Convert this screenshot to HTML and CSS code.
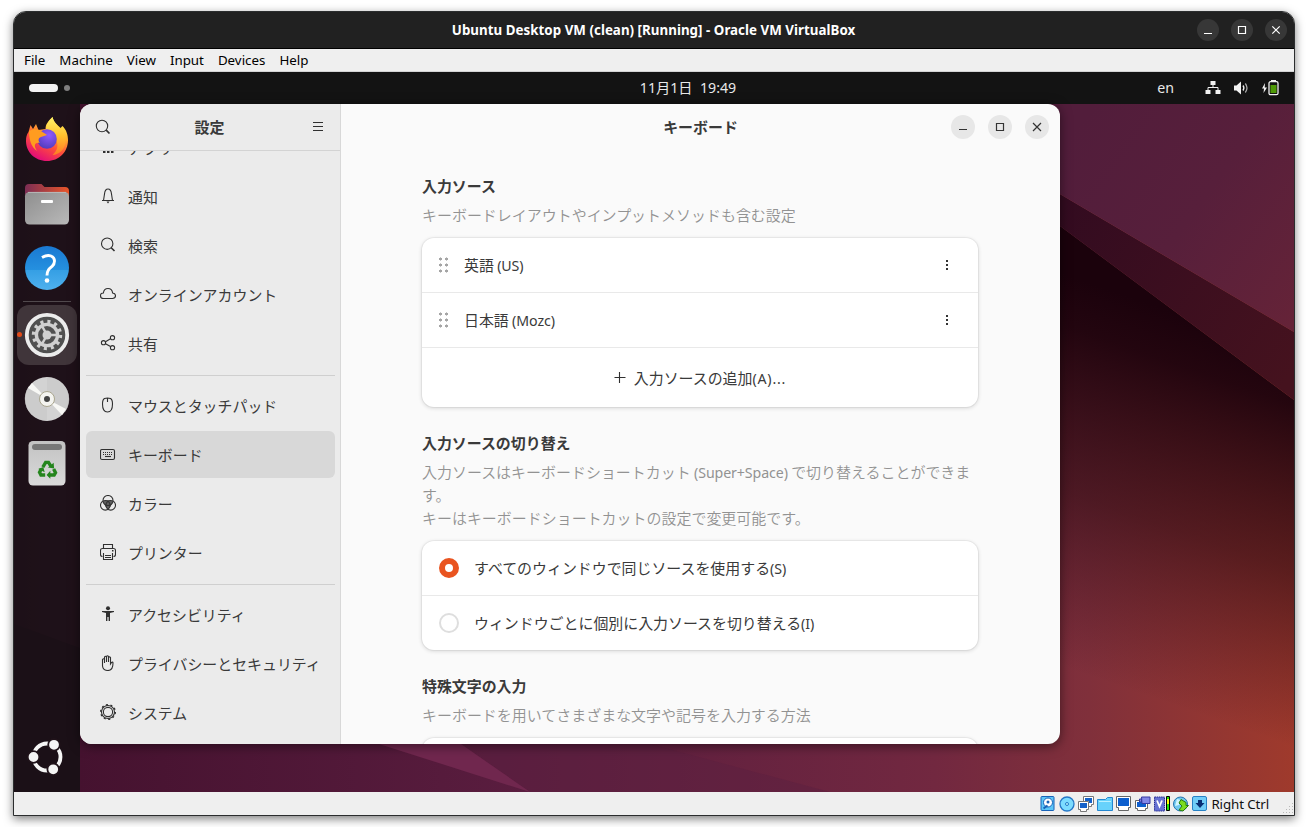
FILE: index.html
```
<!DOCTYPE html>
<html lang="ja">
<head>
<meta charset="utf-8">
<title>Ubuntu Desktop VM</title>
<link rel="stylesheet" href="styles.css">
</head>
<body>
<div class="vm">
  <header class="vm-title">
    <span class="vm-side"></span>
    <span class="vm-name">Ubuntu Desktop VM (clean) [Running] - Oracle VM VirtualBox</span>
    <span class="vm-side vm-buttons">
      <i class="round"><svg width="22" height="22"><path d="M7 14.500h8"/></svg></i>
      <i class="round"><svg width="22" height="22"><path d="M7.500 7.500h7v7h-7z"/></svg></i>
      <i class="round"><svg width="22" height="22"><path d="M7.300 7.300l7.400 7.400M14.700 7.300l-7.400 7.400"/></svg></i>
    </span>
  </header>
  <nav class="vm-menu"><span>File</span><span>Machine</span><span>View</span><span>Input</span><span>Devices</span><span>Help</span></nav>

  <div class="panel">
    <div class="workspaces"><b></b><i></i></div>
    <div class="clock">11月1日&nbsp; 19:49</div>
    <div class="indicators">
      <span class="lang">en</span>
      <svg width="16" height="16" viewBox="0 0 16 16"><path fill="#f2f2f2" d="M5.500 1h5v4h-5zM.5 10h5v4h-5zM10.500 10h5v4h-5z"/><path fill="none" stroke="#f2f2f2" d="M8 5v2.500M3 10V7.500h10V10"/></svg>
      <svg width="16" height="16" viewBox="0 0 16 16"><path fill="#f2f2f2" d="M1 5.500h2.500L8 1.500v13L3.500 10.500H1z"/><path fill="none" stroke="#f2f2f2" stroke-width="1.300" d="M10 5.500q1.800 2.500 0 5"/><path fill="none" stroke="#aaa" stroke-width="1.300" d="M12.300 3.500q3.400 4.500 0 9"/></svg>
      <svg width="18" height="16" viewBox="0 0 18 16"><path fill="#f2f2f2" d="M4 3L1 8.500h2L2.500 13 6 7.500H3.700zM10 0h5v2h-5z"/><rect x="8" y="1.700" width="9" height="13" rx="1.500" fill="none" stroke="#f2f2f2" stroke-width="1.300"/><path fill="#4e9a06" d="M9.500 5h6v8h-6z"/></svg>
    </div>
  </div>

  <div class="desktop">
    <svg class="wallpaper" width="1280" height="688" viewBox="14 104 1280 688" preserveAspectRatio="none">
      <defs>
        <linearGradient id="base" gradientUnits="userSpaceOnUse" x1="14" y1="0" x2="1294" y2="0"><stop offset="0" stop-color="#3a0b28"/><stop offset=".05" stop-color="#45122f"/><stop offset=".4" stop-color="#5a1d3f"/><stop offset=".72" stop-color="#722840"/><stop offset=".84" stop-color="#80303b"/><stop offset="1" stop-color="#9f3a2c"/></linearGradient>
        <linearGradient id="shade" gradientUnits="userSpaceOnUse" x1="1177" y1="313" x2="1055" y2="665"><stop offset="0" stop-color="#1b020c"/><stop offset=".13" stop-color="#1e030d" stop-opacity=".95"/><stop offset=".55" stop-color="#290812" stop-opacity=".58"/><stop offset="1" stop-color="#30091c" stop-opacity="0"/></linearGradient>
        <linearGradient id="sky" gradientUnits="userSpaceOnUse" x1="1060" y1="150" x2="1294" y2="320"><stop offset="0" stop-color="#521d3b"/><stop offset=".5" stop-color="#571f3b"/><stop offset="1" stop-color="#652338"/></linearGradient>
        <linearGradient id="band" gradientUnits="userSpaceOnUse" x1="1060" y1="210" x2="1294" y2="370"><stop offset="0" stop-color="#330b20"/><stop offset="1" stop-color="#45121e"/></linearGradient>
      </defs>
      <path fill="url(#base)" d="M14 104h1280v688H14z"/>
      <path fill="url(#shade)" d="M900 107L1294 400v392H900z"/>
      <path fill="url(#band)" d="M900 100L1294 332v68L1060 226 900 107z"/>
      <path fill="url(#sky)" d="M908 104h386v228L1060 194z"/>
      <path fill="#5c2040" d="M461 744L530 792h300l-180-48z" opacity=".5"/>
      <path fill="#70274e" d="M379 744h82l69 48z"/>
      <path fill="#2b0920" d="M14 624l66 24v144H14z"/>
    </svg>

    <aside class="dock">
      <div class="tile"><svg width="48" height="48" viewBox="0 0 48 48">
        <defs>
          <linearGradient id="fx" x1=".8" y1=".05" x2=".3" y2="1"><stop offset="0" stop-color="#fff44f"/><stop offset=".3" stop-color="#ffb02e"/><stop offset=".6" stop-color="#ff4f3a"/><stop offset="1" stop-color="#e0077d"/></linearGradient>
          <radialGradient id="globe" cx=".6" cy=".3" r=".8"><stop offset="0" stop-color="#9059ff"/><stop offset="1" stop-color="#4b3ab5"/></radialGradient>
          <linearGradient id="tail" x1="0" y1="0" x2="0" y2="1"><stop offset="0" stop-color="#fff36a"/><stop offset=".5" stop-color="#ffc02c"/><stop offset="1" stop-color="#ff7a26"/></linearGradient>
        </defs>
        <path fill="url(#fx)" d="M5.500 16l2-7 2.500 4 3-5 2.500 6 7-1c0-5 3-8 7-12 1 5 5 8 8 11l2-2c4 4 5.500 9 5.500 14 0 12-9 21-21 21S3 36 3 25c0-4 .5-6 2.500-9z"/>
        <path fill="url(#tail)" d="M23 13c0-5 3-8 6.500-12 1 5 5 8 8 12l2-1c5 9 4 18-1 23-2 2-6 4-9 4 5-5 6-9 4-14-1-7-5-11-10.500-12z"/>
        <circle cx="24" cy="23" r="9.800" fill="url(#globe)"/>
        <path fill="#ff9c20" d="M6 15l5-2 6 1c2 2 3 2 7 5l-6 2c-3 1-3 4-1 6-5-1-7 2-3 8C8 31 6 23 6 15z"/>
      </svg></div>
      <div class="tile"><svg width="48" height="48" viewBox="0 0 48 48">
        <defs><linearGradient id="fold" x1="0" x2="1"><stop offset="0" stop-color="#7c2d54"/><stop offset="1" stop-color="#e9562a"/></linearGradient><linearGradient id="front" x1="0" y1="0" x2="1" y2="1"><stop offset="0" stop-color="#8e8e8e"/><stop offset="1" stop-color="#b9b9b9"/></linearGradient></defs>
        <path fill="url(#fold)" d="M2 8q0-4 4-4h12.500l3 3H42q4 0 4 4v18H2z"/>
        <rect x="2" y="12" width="44" height="32.500" rx="4.500" fill="url(#front)"/><path stroke="#c2c2c2" stroke-width=".8" d="M5 12.400h38"/>
        <rect x="18" y="20" width="12" height="3" rx="1" fill="#fff"/>
      </svg></div>
      <div class="tile"><svg width="48" height="48" viewBox="0 0 48 48">
        <defs><linearGradient id="help" x1="0" y1="0" x2="0" y2="1"><stop offset="0" stop-color="#1a79d2"/><stop offset=".54" stop-color="#2590df"/><stop offset=".55" stop-color="#359fe4"/><stop offset="1" stop-color="#4fb1ee"/></linearGradient></defs>
        <circle cx="24" cy="24" r="22" fill="url(#help)"/><path fill="none" stroke="#fff" stroke-width="2.900" d="M19 13.500q5-3 9-1.500c5 2 4 7.500 1 10.500-3 2.500-5 4-5 9"/><circle cx="24" cy="36.500" r="2.300" fill="#fff"/>
      </svg></div>
      <div class="rule"></div>
      <div class="tile active"><svg width="48" height="48" viewBox="0 0 48 48">
        <circle cx="24" cy="24" r="20.200" fill="#505050" stroke="#ececec" stroke-width="3.800"/>
        <circle cx="24" cy="24" r="13.200" fill="none" stroke="#d0d0d0" stroke-width="4" stroke-dasharray="3 3.910"/>
        <circle cx="24" cy="24" r="10.600" fill="none" stroke="#d0d0d0" stroke-width="3.400"/>
        <path fill="none" stroke="#d0d0d0" stroke-width="2.500" d="M24 24h10M24 24l-5-9M24 24l-5 9"/><circle cx="24" cy="24" r="4.500" fill="#d0d0d0"/>
      </svg></div>
      <div class="tile"><svg width="48" height="48" viewBox="0 0 48 48">
        <circle cx="24" cy="24" r="22" fill="#d3d3d3"/><path fill="#c8c8c8" d="M24 24V2a22 22 0 0 1 18 35zM24 24v22A22 22 0 0 1 6 11z" opacity=".6"/><path fill="#f8f8f5" d="M24 24L5 13l4-5zM24 24l19 10-4 6z"/>
        <circle cx="24" cy="24" r="7.500" fill="#f4f4f0" stroke="#aaa68f"/><circle cx="24" cy="24" r="3" fill="#444"/>
      </svg></div>
      <div class="tile"><svg width="48" height="48" viewBox="0 0 48 48">
        <defs><linearGradient id="bin" x1="0" y1="0" x2="0" y2="1"><stop offset="0" stop-color="#c2c2c2"/><stop offset="1" stop-color="#dadada"/></linearGradient></defs>
        <rect x="5.500" y="2" width="37" height="44.500" rx="4.500" fill="url(#bin)"/><rect x="9" y="5" width="30" height="6" rx="3" fill="#777"/>
        <g transform="translate(1.500 2.200) scale(.94)"><g fill="none" stroke="#24851d" stroke-width="3.600"><path d="M19.500 27.500l3-5h3l2.500 4"/><path d="M31 29.500l2 4-1.500 2.500H26"/><path d="M22 36h-4.500l-1.500-3 2-3.500"/></g>
        <path fill="#24851d" d="M25 28l6.500 1-.5-6zM27.500 31.500v8.500L23.500 36zM14.500 29.500l5.500-2 1.500 5.500z"/></g>
      </svg></div>
      <div class="launcher"><svg width="40" height="40" viewBox="0 0 40 40">
        <circle cx="21" cy="20" r="13.500" fill="none" stroke="#f5f5f5" stroke-width="3.800"/>
        <g fill="#f5f5f5" stroke="#20131a" stroke-width="1.800"><circle cx="7.500" cy="20" r="5.800"/><circle cx="28" cy="7.800" r="5.800"/><circle cx="27.200" cy="32.300" r="5.800"/></g>
      </svg></div>
    </aside>

    <main class="settings">
      <section class="sidebar">
        <header class="side-head">
          <svg class="ico" width="16" height="16" viewBox="0 0 16 16"><circle cx="7" cy="7" r="5.700"/><path d="M11.200 11.200l3.300 3.300" stroke-width="1.700"/></svg>
          <h1>設定</h1>
          <svg class="ico" width="16" height="16" viewBox="0 0 16 16"><path d="M3 3.500h10M3 7.500h10M3 11.500h10"/></svg>
        </header>
        <div class="side-list">
          <div class="item"><svg class="ico" width="16" height="16" viewBox="0 0 16 16"><path class="solid" d="M3 11h2.500v3H3zM7 11h2.500v3H7zM11 11h2.500v3H11z"/></svg>アプリ</div>
          <div class="item"><svg class="ico" width="16" height="16" viewBox="0 0 16 16"><path d="M2 12.500h12M3.500 12.500L4.500 6q.5-5 3.500-5t3.500 5l1 6.500"/><path class="solid" d="M6.500 13.500h3L8 15.500z"/></svg>通知</div>
          <div class="item"><svg class="ico" width="16" height="16" viewBox="0 0 16 16"><circle cx="7.200" cy="6.700" r="5.700"/><path d="M11.200 10.700l3.300 3.300" stroke-width="1.600"/></svg>検索</div>
          <div class="item"><svg class="ico" width="16" height="16" viewBox="0 0 16 16"><path d="M3.500 12.500Q.5 12.500.5 9.700T3.400 7q.5-4.500 4.600-4.500T12.600 7q2.900.2 2.900 2.800t-3 2.700z"/></svg>オンラインアカウント</div>
          <div class="item"><svg class="ico" width="16" height="16" viewBox="0 0 16 16"><circle cx="12.500" cy="2.700" r="2.100"/><circle cx="3.500" cy="7.700" r="2.100"/><circle cx="12.500" cy="12.700" r="2.100"/><path d="M5.500 6.700l5-2.900M5.500 8.700l5 2.900"/></svg>共有</div>
          <hr>
          <div class="item"><svg class="ico" width="16" height="16" viewBox="0 0 16 16"><path d="M4.500 1.500q3-1 6 0 2 1 2 5.500c0 5-1.500 8-5 8S2.500 12 2.500 7q0-4.500 2-5.500zM7.500 1v4"/></svg>マウスとタッチパッド</div>
          <div class="item selected"><svg class="ico" width="16" height="16" viewBox="0 0 16 16"><rect x=".5" y="3.500" width="14" height="10" rx="1.500"/><path stroke-dasharray="1 1" d="M3 6.500h10M3 8.500h10"/><path d="M5 10.500h6"/></svg>キーボード</div>
          <div class="item"><svg class="ico" width="16" height="16" viewBox="0 0 16 16"><circle cx="8" cy="5.500" r="5"/><circle cx="5.300" cy="10.300" r="4.800"/><circle cx="10.700" cy="10.300" r="4.800"/><path class="solid" d="M3.500 6q4-1.800 9 0-.5 5-4.500 8Q4 11 3.500 6z" opacity=".75"/></svg>カラー</div>
          <div class="item"><svg class="ico" width="16" height="16" viewBox="0 0 16 16"><path d="M3.500 4.500v-4h9v4M2.500 12.500q-2 0-2-2v-4q0-2 2-2h11q2 0 2 2v4q0 2-2 2M3.500 9v6.500h9V9M5 11.500h6M5 13.500h6"/><path class="solid" d="M12 6h1.500v1.500H12z"/></svg>プリンター</div>
          <hr>
          <div class="item"><svg class="ico" width="16" height="16" viewBox="0 0 16 16"><circle class="solid" cx="8" cy="2.300" r="2"/><path class="solid" d="M2 5h12v1l-4 1v8H8.600v-4H7.400v4H6V7L2 6z"/></svg>アクセシビリティ</div>
          <div class="item"><svg class="ico" width="16" height="16" viewBox="0 0 16 16"><path d="M2.500 8V4.500q1-1.500 2 0V8 2q1-1.500 2 0v5V1.300q1-1.200 2 0V7 2.500q1-1.300 2 0V9l1-1.500q1.500-1 1.500.5 0 7.500-5 7.500t-5.500-4.500z"/></svg>プライバシーとセキュリティ</div>
          <div class="item"><svg class="ico" width="16" height="16" viewBox="0 0 16 16"><circle cx="8" cy="8" r="4.600"/><circle cx="8" cy="8" r="6.500"/><circle cx="8" cy="8" r="7.300" stroke-width="1.400" stroke-dasharray="2 2.587"/></svg>システム</div>
        </div>
      </section>

      <section class="page">
        <header class="page-head">
          <span></span><h1>キーボード</h1>
          <div class="page-buttons">
            <i class="round"><svg width="24" height="24"><path d="M8 14.500h8"/></svg></i>
            <i class="round"><svg width="24" height="24"><path d="M8.500 8.500h7v7h-7z"/></svg></i>
            <i class="round"><svg width="24" height="24"><path d="M8 8l8 8M16 8l-8 8"/></svg></i>
          </div>
        </header>
        <div class="groups">
          <h2>入力ソース</h2>
          <p>キーボードレイアウトやインプットメソッドも含む設定</p>
          <div class="card">
            <div class="row"><span class="grip"></span><span class="label">英語 <span class="latin">(US)</span></span><span class="more"></span></div>
            <div class="row"><span class="grip"></span><span class="label">日本語 <span class="latin">(Mozc)</span></span><span class="more"></span></div>
            <div class="row add"><svg class="ico" width="12" height="12"><path d="M.5 5.500h11M5.500 0v11"/></svg><span>入力ソースの追加<span class="latin wide">(A)...</span></span></div>
          </div>
          <h2>入力ソースの切り替え</h2>
          <p>入力ソースはキーボードショートカット <span class="latin">(Super+Space)</span> で切り替えることができま<br>す。<br>キーはキーボードショートカットの設定で変更可能です。</p>
          <div class="card">
            <div class="row"><span class="radio on"></span><span class="choice">すべてのウィンドウで同じソースを使用する<span class="latin">(S)</span></span></div>
            <div class="row"><span class="radio"></span><span class="choice">ウィンドウごとに個別に入力ソースを切り替える<span class="latin">(I)</span></span></div>
          </div>
          <h2>特殊文字の入力</h2>
          <p>キーボードを用いてさまざまな文字や記号を入力する方法</p>
          <div class="card"><div class="row"></div></div>
        </div>
      </section>
    </main>
  </div>

  <footer class="vm-status">
    <svg width="16" height="16" viewBox="0 0 16 16"><rect x="1" y=".5" width="13" height="14" rx="1" fill="#5cc6f8" stroke="#1762b8"/><circle cx="8" cy="6.500" r="4.500" fill="#fff" stroke="#1762b8"/><circle cx="8" cy="6" r="1.500" fill="#1762b8"/><path stroke="#1762b8" stroke-width="2" d="M3.500 12.500l4-3"/></svg>
    <svg width="16" height="16" viewBox="0 0 16 16"><circle cx="8" cy="8" r="7" fill="#7cdcff" stroke="#2578c8" stroke-width="1.300"/><circle cx="8" cy="8" r="1.500" fill="#bff" stroke="#2578c8"/></svg>
    <svg width="16" height="16" viewBox="0 0 16 16"><g fill="#fff" stroke="#777"><path d="M5.500.5h10v8h-2v2h-8z"/><path d="M.5 5.500h10v8h-2v2h-6v-2h-2z"/></g><path fill="#1561c9" d="M7 2h7v5h-3V5H7zM2 7h7v5H2z"/></svg>
    <svg width="16" height="16" viewBox="0 0 16 16"><path fill="#67d2fb" stroke="#2387d1" d="M.5 3.500h8l2-2h5v13H.5z"/><path stroke="#b9f0ff" d="M2 5.500h12"/></svg>
    <svg width="16" height="16" viewBox="0 0 16 16"><path fill="#fff" stroke="#666" d="M.5.500h14v11h-2v3h-10v-3h-2z"/><path fill="#0d5fce" d="M2 2h11v8H2z"/></svg>
    <svg width="16" height="16" viewBox="0 0 16 16"><path fill="#fff" stroke="#666" d="M.5 4.500h12v8h-2v2h-8v-2h-2z"/><path fill="#0d5fce" d="M2 6h9v5H2z"/><path fill="#8187e6" stroke="#363ba2" d="M6.500 1h8.500v6.500H7zM4.500 3h2v3h-2z"/></svg>
    <svg width="16" height="16" viewBox="0 0 16 16"><path fill="#6672d2" stroke="#272c93" stroke-dasharray="1.500 .7" d="M.5 1h10v14H.5z"/><path fill="none" stroke="#fff" stroke-width="1.800" d="M3 4.500l2.500 6 2.500-6"/><path fill="#20e400" stroke="#000" d="M12.500.500h3v14h-3z"/><path fill="#ff0" d="M13 3h2v5h-2z"/></svg>
    <svg width="16" height="16" viewBox="0 0 16 16"><circle cx="7.500" cy="8" r="7" fill="#70c9ef" stroke="#2473ae"/><path fill="#d2f5ff" d="M4 3l4 1-2 5-4 1z"/><path fill="#7bdc20" stroke="#287c0c" d="M8 3.500l5 3v3h2.500L10 15l-4-1 3-4-3-3z"/></svg>
    <svg width="16" height="16" viewBox="0 0 16 16"><rect x=".5" y=".5" width="14" height="14" rx="1.500" fill="#70cdf7" stroke="#2681c5"/><path fill="#082e73" d="M6 4h4v3h2.500L8 12 3.500 7H6z"/></svg>
    <span class="hostkey">Right Ctrl</span>
    <svg class="resize" width="12" height="12" viewBox="0 0 12 12"><path fill="#b9b9b9" d="M10 0h1v1h-1zM7 3h1v1H7zM10 3h1v1h-1zM4 6h1v1H4zM7 6h1v1H7zM10 6h1v1h-1zM1 9h1v1H1zM4 9h1v1H4zM7 9h1v1H7zM10 9h1v1h-1z"/></svg>
  </footer>
</div>
</body>
</html>
```
FILE: styles.css
```
* { box-sizing: border-box; }
body {
  margin: 0;
  padding: 11px 13px;
  background: #fff;
  font-family: "Noto Sans", "Noto Sans CJK JP", sans-serif;
  font-size: 13.33px;
  overflow: hidden;
}
h1, h2, p { margin: 0; font-weight: 400; }
.vm {
  width: 1282px;
  height: 805px;
  border: 1px solid #2b2d2e;
  border-radius: 13px 13px 0 0;
  overflow: hidden;
  display: flex;
  flex-direction: column;
  background: #efefef;
  box-shadow: 0 3px 10px rgba(0, 0, 0, .5);
}
.vm-title {
  height: 37px;
  flex: none;
  display: flex;
  align-items: center;
  background: #212121;
  border-bottom: 1px solid #000;
  color: #fff;
}
.vm-side { flex: 1; }
.vm-name { padding-left: 6px; font-weight: 700; white-space: nowrap; letter-spacing: .03px; }
.vm-buttons { display: flex; justify-content: flex-end; gap: 12px; padding-right: 7px; }
.round { display: block; border-radius: 50%; }
.round svg { display: block; fill: none; }
.vm-buttons .round { background: #373737; }
.vm-buttons svg { stroke: #fff; stroke-width: 1.2; }
.vm-menu {
  height: 23px;
  flex: none;
  display: flex;
  align-items: center;
  gap: 14px;
  padding-left: 10px;
  border-bottom: 1px solid #d3d4d5;
  color: #000;
}
.panel {
  height: 32px;
  flex: none;
  display: grid;
  grid-template-columns: 1fr auto 1fr;
  align-items: center;
  padding: 0 15px;
  background: #131313;
  color: #e8e8e8;
  font-size: 14.2px;
}
.workspaces { display: flex; align-items: center; gap: 6px; }
.workspaces b { width: 29px; height: 8px; border-radius: 4px; background: #f2f2f2; }
.workspaces i { width: 6px; height: 6px; border-radius: 3px; background: #7f7f7f; }
.clock { padding: 0 0 2px 68px; }
.indicators { display: flex; align-items: center; justify-content: flex-end; gap: 12px; }
.lang { margin-right: 19px; padding-bottom: 2px; }
.desktop { position: relative; height: 688px; flex: none; display: flex; background: #45122f; }
.wallpaper { position: absolute; inset: 0; }
.dock {
  position: relative;
  width: 66px;
  padding-top: 4px;
  display: flex;
  flex-direction: column;
  background: rgba(24, 18, 21, .84);
}
.tile { width: 60px; height: 60px; margin: 2px 3px; display: grid; place-items: center; border-radius: 12px; }
.tile.active { position: relative; background: #40353a; }
.tile.active::before { content: ""; position: absolute; left: 0; top: 27px; width: 5px; height: 5px; border-radius: 50%; background: #e24a18; }
.rule { height: 1px; margin: 1px 9px; background: #51494d; }
.launcher { margin: auto 0 15px 12px; height: 40px; }
.settings {
  position: relative;
  width: 980px;
  height: 640px;
  display: flex;
  border-radius: 12px;
  overflow: hidden;
  background: #fafafa;
  color: #3a3a3a;
  font-family: "Noto Sans CJK JP", sans-serif;
  font-size: 14.93px;
  box-shadow: 0 2px 12px rgba(0, 0, 0, .5);
}
.settings h1, .settings h2 { font-size: 14.93px; font-weight: 700; }
.settings h1 { padding-bottom: 2px; }
.sidebar { width: 261px; height: 640px; background: #ebebeb; border-right: 1px solid #d8d8d8; display: flex; flex-direction: column; }
.side-head { height: 47px; flex: none; display: flex; align-items: center; justify-content: space-between; padding: 0 14px 0 15px; border-bottom: 1px solid #d3d3d3; }
.side-head h1 { padding-right: 2px; }
.ico { display: block; fill: none; stroke: #303030; stroke-width: 1.1; flex: none; }
.ico .solid { fill: #303030; stroke: none; }
.side-list { flex: 1; min-height: 0; overflow: hidden; display: flex; flex-direction: column; gap: 2px; padding: 0 5px 0 6px; }
.item { height: 47px; flex: none; display: flex; align-items: center; gap: 12px; padding-left: 14px; border-radius: 6px; white-space: nowrap; }
.item:first-child { margin-top: -27px; }
.item .ico { margin-top: -1px; }
.selected { background: #d8d8d8; }
.side-list hr { width: 249px; height: 1px; flex: none; margin: 6px 0 4px; border: 0; background: #cfcfcf; }
.page { flex: 1; min-width: 0; }
.page-head { height: 46px; display: grid; grid-template-columns: 1fr auto 1fr; align-items: center; padding-right: 11px; }
.page-buttons { display: flex; justify-content: flex-end; gap: 13px; }
.page-head h1 { padding-left: 11px; }
.page-buttons .round { background: #e7e7e7; }
.page-buttons svg { stroke: #333; stroke-width: 1.2; }
.groups { width: 556px; margin-left: 81px; }
.groups h2 { margin-top: 25px; height: 22px; line-height: 22px; }
.groups p { margin: 6px 0 12px; font-size: 14.97px; line-height: 23px; color: #929292; white-space: nowrap; font-weight: 350; }
.latin { font-family: "Noto Sans", sans-serif; font-weight: 400; font-size: 14.2px; line-height: 1; letter-spacing: -.1px; }
.wide { letter-spacing: .8px; }
.card { background: #fff; border-radius: 12px; box-shadow: 0 0 0 1px rgba(0, 0, 0, .04), 0 1px 4px rgba(0, 0, 0, .16); }
.row { height: 54px; display: flex; align-items: center; padding: 0 17px; white-space: nowrap; }
.row + .row { height: 55px; border-top: 1px solid #e9e9e9; }
.row + .row.add { height: 60px; justify-content: center; gap: 8px; }
.label { flex: 1; padding-bottom: 2px; }
.choice { padding-bottom: 2px; }
.grip { width: 9px; height: 16px; margin-right: 16px; background: radial-gradient(circle at 1.500px 2px, #a5a5a5 1.3px, transparent 1.8px) 0 0 / 6px 6px; }
.more { width: 2px; height: 10px; margin-right: 13px; background: repeating-linear-gradient(#333 0 2px, transparent 2px 4px); }
.radio { width: 20px; height: 20px; margin-right: 15px; border: 2px solid #dedede; border-radius: 50%; background: #fff; }
.radio.on { border: 6px solid #e95420; }
.vm-status { height: 23px; flex: none; display: flex; align-items: center; justify-content: flex-end; gap: 3px; color: #111; }
.hostkey { margin-left: 0; letter-spacing: -.1px; }
.resize { margin-left: 10px; align-self: flex-end; }
```
